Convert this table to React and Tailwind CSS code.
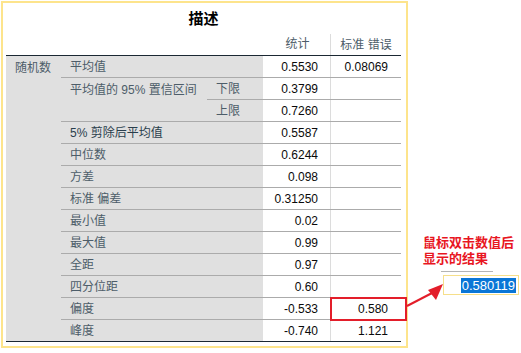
const FONT = "font-['Liberation_Sans','Noto_Sans_CJK_SC',sans-serif]"

const rows = [
  ['5% 剪除后平均值', '0.5587', ''],
  ['中位数', '0.6244', ''],
  ['方差', '0.098', ''],
  ['标准 偏差', '0.31250', ''],
  ['最小值', '0.02', ''],
  ['最大值', '0.99', ''],
  ['全距', '0.97', ''],
  ['四分位距', '0.60', ''],
  ['偏度', '-0.533', '0.580'],
  ['峰度', '-0.740', '1.121'],
]

function Cells({ stat, err }) {
  return (
    <>
      <div className="w-[67px] bg-white flex items-center justify-end pr-[12px] text-[#0a0a0a]">{stat}</div>
      <div className="w-[71px] bg-white border-l border-[#dcdcdc] flex items-center justify-end pr-[13px] text-[#0a0a0a]">{err}</div>
    </>
  )
}

export default function App() {
  return (
    <div className={`relative w-[521px] h-[353px] bg-white p-[1px] ${FONT} text-[12px]`}>
      {/* yellow frame */}
      <div className="w-[407px] h-[347px] border-2 border-[#fde48c] pl-[3px]">
        <div className="w-[395px]">
          {/* title */}
          <div className="h-[30px] flex items-center justify-center pt-[2px]">
            <span className="text-[15px] font-bold text-black">描述</span>
          </div>

          {/* header row */}
          <div className="flex h-[23px] border-b border-[#1b2833] text-[#4d5d69]">
            <div className="w-[257px]" />
            <div className="w-[67px] flex items-center justify-center pl-[2px]">统计</div>
            <div className="w-[71px] mt-[1px] border-l border-[#dcdcdc] flex items-center justify-center">标准 错误</div>
          </div>

          {/* body */}
          <div className="flex border-b border-[#1b2833]">
            <div className="w-[55px] bg-[#e0e0e0] pl-[9px] pt-[3px] text-[#4d5d69]">随机数</div>
            <div className="flex-1 flex flex-col">
              {/* 平均值 */}
              <div className="flex h-[21px]">
                <div className="w-[202px] bg-[#e0e0e0] flex items-center pl-[9px] text-[#4d5d69]">平均值</div>
                <Cells stat="0.5530" err="0.08069" />
              </div>

              {/* confidence interval */}
              <div className="flex">
                <div className="w-[146px] h-[44px] bg-[#e0e0e0] border-t border-[#ababab] pl-[9px] pt-[3px] text-[#4d5d69]">
                  平均值的 95% 置信区间
                </div>
                <div className="flex flex-col">
                  <div className="flex h-[22px] border-t border-[#ababab]">
                    <div className="w-[56px] bg-[#e0e0e0] flex items-center pl-[9px] text-[#4d5d69]">下限</div>
                    <Cells stat="0.3799" err="" />
                  </div>
                  <div className="flex h-[22px] border-t border-[#ababab]">
                    <div className="w-[56px] bg-[#e0e0e0] flex items-center pl-[9px] text-[#4d5d69]">上限</div>
                    <Cells stat="0.7260" err="" />
                  </div>
                </div>
              </div>

              {rows.map(([label, stat, err]) => (
                <div key={label} className="flex h-[22px] border-t border-[#ababab]">
                  <div className={`w-[202px] bg-[#e0e0e0] flex items-center pl-[9px] ${label.startsWith('5%') ? 'text-[#2a3e4c]' : 'text-[#4d5d69]'}`}>
                    {label}
                  </div>
                  <Cells stat={stat} err={err} />
                </div>
              ))}
            </div>
          </div>
        </div>
      </div>

      {/* highlighted cell */}
      <div className="absolute left-[330px] top-[297px] w-[77px] h-[24px] border-2 border-[#e31e2a]" />

      {/* annotation */}
      <div className="absolute left-[423px] top-[235px] text-[13px] leading-[16px] font-bold text-[#e8161f]">
        <div>鼠标双击数值后</div>
        <div>显示的结果</div>
      </div>

      {/* arrow */}
      <svg className="absolute left-[400px] top-[276px]" width="50" height="36" viewBox="0 0 50 36">
        <line x1="7" y1="30" x2="34" y2="16" stroke="#e31e2a" strokeWidth="2" />
        <polygon points="43,8 28,14 36,24" fill="#e31e2a" />
      </svg>

      {/* edit cell popup */}
      <div className="absolute left-[441px] top-[271px] w-[52px] h-px bg-[#b4b4b4]" />
      <div className="absolute left-[443px] top-[275px] w-[76px] h-[20px] border border-[#f6df8a] flex items-center justify-end pr-[2px]">
        <span className="bg-[#0a76d6] text-white text-[13px] leading-[15px] px-px">0.580119</span>
      </div>
    </div>
  )
}
